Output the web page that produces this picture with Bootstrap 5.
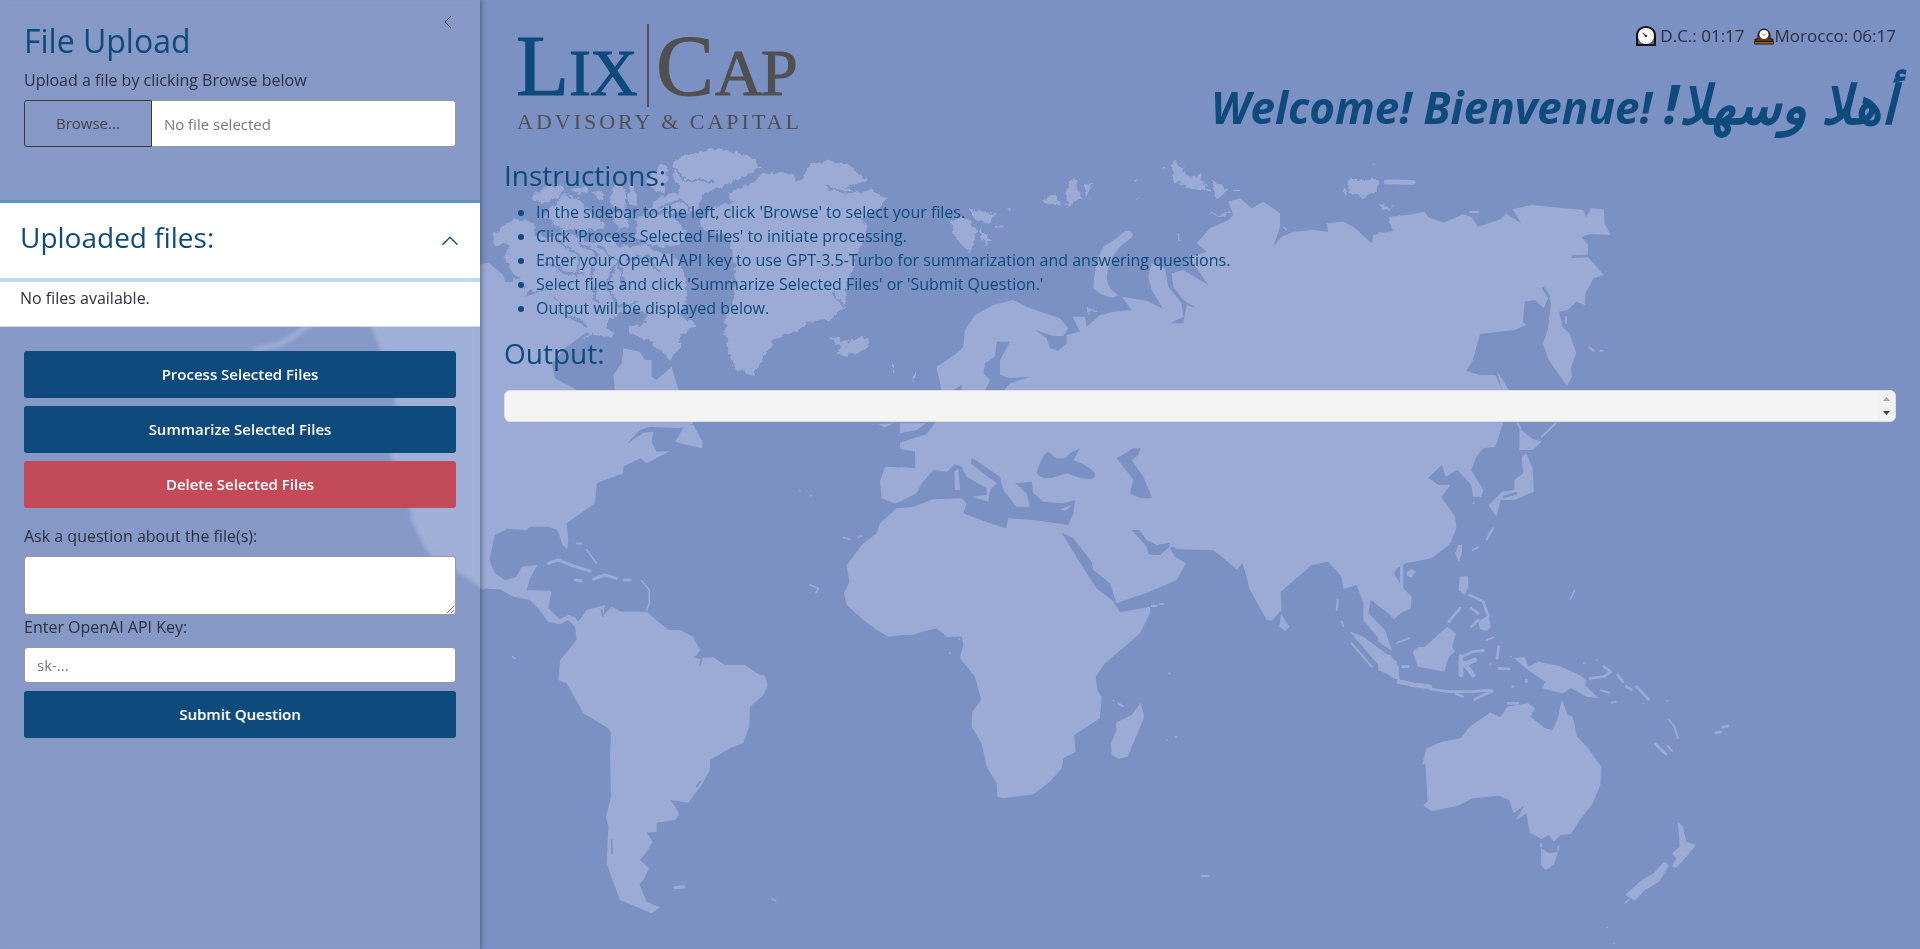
<!DOCTYPE html>
<html lang="en">
<head>
<meta charset="utf-8">
<meta name="viewport" content="width=device-width, initial-scale=1">
<title>LixCap File Assistant</title>
<link href="https://cdn.jsdelivr.net/npm/bootstrap@5.3.0/dist/css/bootstrap.min.css" rel="stylesheet">
<style>
  :root { --navy: #0e4a7b; --sea: #7b90c3; --land: #9babd6; }
  body { font-family: "Open Sans", "Noto Sans", sans-serif; font-weight: 400; font-size: 16px; line-height: 24px; color: #2b3040; background: var(--sea); }
  .world { position: fixed; inset: 0; width: 100%; height: 100%; z-index: -1; }
  .land { fill: var(--land); }
  .sea { fill: var(--sea); }
  .isles { fill: none; stroke: var(--land); stroke-linecap: round; stroke-linejoin: round; }
  .straits { fill: none; stroke: var(--sea); stroke-linecap: round; stroke-linejoin: round; }
  h1, h2, h3 { color: var(--navy); font-weight: 400; }
  .side { background: rgba(206, 211, 220, .12); backdrop-filter: blur(2px); box-shadow: 1px 0 5px rgba(40, 50, 80, .6); }
  .side h2 { font-size: 32px; line-height: 38px; font-weight: 400; }
  .side-top { padding: 22px 24px 0; }
  .section-title { font-size: 28px; line-height: 34px; }
  .collapse-toggle { position: absolute; top: 12px; right: 24px; line-height: 0; color: #222; }
  .form-control, .btn { border-radius: 3px; font-size: 15px; }
  .form-control { border-color: #999; padding: 5px 12px; height: 36px; }
  .input-group .form-control { height: 47px; }
  textarea.form-control { height: 59px; }
  .form-control::placeholder { color: #777; opacity: 1; }
  .browse-btn { border: 1px solid #3a3a3a; color: #444; padding: 10px 31px; }
  .wide-btn { height: 47px; font-weight: 600; color: #fff; background: var(--navy); border: 0; }
  .wide-btn.danger { background: #c34a58; }
  .files { background: #fff; border-top: 3px solid #6093c9; border-bottom: 1px solid #d5dae5; margin-top: 53px; }
  .files-head { border: 0; border-bottom: 4px solid #bddbec; background: none; height: 79px; padding: 0 20px; color: var(--navy); }
  .files-body { height: 44px; padding: 4px 20px; }
  .clocks { font-size: 17px; line-height: 23px; }
  .welcome { font-size: 44px; line-height: 53px; font-weight: 700; font-style: italic; margin-top: 34px; }
  .welcome bdi { font-size: 54px; line-height: 0; }
  .steps { color: var(--navy); padding-left: 32px; }
  .output-title { margin-bottom: 20px; }
  .output-box { height: 32px; background: #f4f4f4; border: 1px solid #ddd; border-radius: 6px; }
  .logo-text { font-family: "Liberation Serif", serif; }
</style>
</head>
<body>
<svg class="world" viewBox="0 0 1920 949" preserveAspectRatio="xMinYMin slice" aria-hidden="true">
  <defs>
    <filter id="rough" x="-5%" y="-5%" width="110%" height="110%" color-interpolation-filters="sRGB">
      <feTurbulence type="fractalNoise" baseFrequency=".05" numOctaves="3" seed="4"/>
      <feDisplacementMap in="SourceGraphic" scale="26" xChannelSelector="R" yChannelSelector="G"/>
    </filter>
  </defs>
  <!-- Pacific coast -->
  <path class="land" d="M484 262 470 300 340 300 345 326 370 326 379 345 395 400 389 450 402 490 412 515 425 542 446 564 484 590Z"/>
  <path class="isles" stroke-width="5" d="M255 350 280 344 300 332 312 322M413 518 425 543 438 562"/>
  <path class="sea" d="M315 330C325 318 355 318 370 328L378 345 350 350Z"/>
  <!-- The Americas, Greenland and the Atlantic side -->
  <g transform="translate(480 130) scale(.33333)">
    <g filter="url(#rough)">
      <path class="land" d="M40 320 95 265 160 275 170 315 200 325 270 310 330 340 390 320 420 350 500 345 530 370 590 380 615 430 620 520 600 560 650 580 600 620 600 650 570 690 520 640 450 610 450 590 500 580 500 550 440 540 400 560 380 590 400 625 340 610 300 640 330 600 300 565 240 550 275 530 240 520 195 480 150 485 135 500 130 460 75 462 120 440 90 420 75 380 90 340 40 350Z"/>
      <path class="land" d="M155 200 210 165 255 175 235 205 185 220ZM190 260 250 195 300 205 330 250 380 285 340 300 250 300ZM270 175 330 170 320 190 280 190ZM340 190 370 180 375 210 350 210ZM385 200 405 165 435 175 440 235 400 235ZM445 150 470 190 470 230 445 225ZM500 150 550 95 565 120 550 190 520 180ZM470 260 560 250 620 300 600 345 520 350 470 320ZM395 250 440 250 450 290 410 300Z"/>
      <path class="land" d="M580 90 640 70 720 55 800 75 840 110 790 140 720 170 680 185 640 250 560 245 500 240 540 200 600 190 580 140Z"/>
      <path class="land" d="M745 190 780 175 820 155 850 130 890 130 940 130 950 160 970 140 990 100 1050 92 1100 100 1160 150 1100 170 1120 185 1180 180 1220 205 1190 240 1150 260 1160 300 1150 340 1125 370 1130 400 1100 450 1095 530 1050 570 980 575 950 605 880 630 850 680 825 735 800 730 765 715 745 660 735 600 740 550 765 500 760 400 755 350 740 320 670 300 660 280 700 230 760 215Z"/>
      <path class="land" d="M1050 625 1075 620 1090 640 1150 618 1165 640 1150 665 1100 680 1065 665 1080 655Z"/>
      <path class="straits" stroke-width="8" d="M230 330 300 380 290 440M300 340 350 370 330 450 350 520M360 350 420 400 430 480M200 400 260 430 310 430M440 390 500 380 540 430M410 400 380 460 410 530 470 520M560 100 620 150 700 155M640 250 600 210 540 230M1060 490 1090 525M1040 170 1100 190 1150 180"/>
      <path class="isles" stroke-width="6" d="M1238 705 1240 720M1302 735 1298 750M345 605 360 570 380 610"/>
    </g>
    <path class="land" d="M-5 405 25 398 70 435 75 455 130 460 135 500 195 480 240 520 275 530 240 550 300 580 330 600 260 650 215 700 225 745 300 785 405 785 400 735 425 700 430 655 480 665 495 690 515 690 515 740 530 750 575 710 595 780 640 880 600 895 510 890 480 900 440 942 490 908 520 905 515 935 530 965 570 963 500 1000 480 985 430 1010 430 1030 350 1060 345 1120 260 1180 265 1230 262 1258 248 1245 232 1200 205 1190 150 1190 140 1200 80 1197 45 1215 28 1290 45 1330 75 1350 108 1342 125 1310 172 1305 150 1345 140 1380 215 1382 205 1435 240 1468 265 1455 285 1462 295 1475 320 1440 375 1425 370 1455 395 1430 425 1445 500 1445 565 1500 600 1500 640 1520 660 1560 645 1585 700 1582 735 1605 795 1605 835 1632 855 1637 863 1665 850 1695 810 1730 808 1790 790 1840 750 1855 690 1890 690 1920 665 1965 625 2018 570 2010 590 2035 597 2055 585 2070 530 2078 530 2105 500 2108 518 2135 500 2165 480 2190 507 2215 490 2250 478 2262 500 2315 540 2332 515 2350 420 2310 390 2230 380 2200 385 2090 378 2060 393 2000 390 1880 393 1810 385 1795 310 1750 260 1660 235 1650 240 1590 290 1530 285 1490 265 1470 240 1483 205 1475 170 1430 150 1410 100 1400 60 1378 -5 1375Z"/>
    <path class="land" d="M585 935 615 885 640 885 668 935 665 955 610 942Z"/>
    <path class="straits" stroke-width="5" d="M365 1440 368 1458M650 1970 660 1955M395 2130 396 2170M645 1580 665 1585 660 1605"/>
    <path class="isles" stroke-width="9" d="M205 1300 235 1290 280 1308 330 1323M340 1347 375 1335 410 1345M285 1350 303 1352M432 1350 450 1350M585 2273 612 2270"/>
    <path class="isles" stroke-width="5" d="M290 1240 305 1240M320 1260 350 1300M485 1352 508 1380 508 1420 500 1440M1090 1222 1110 1228M1135 1222 1145 1218M990 1365 1015 1375 1008 1387M98 1580 105 1586M875 2307 887 2312M960 1083V1083M992 1097V1097"/>
    <!-- Western Europe and north-west Africa -->
    <path class="land" d="M1195 882 1240 880 1215 893ZM1260 875 1365 875 1335 900 1300 915 1250 920 1290 900ZM1445 870 1365 890 1340 915 1265 942 1305 965 1305 1015 1215 1010 1200 1055 1205 1105 1245 1120 1310 1108 1330 1070 1360 1025 1395 1008 1445 1015ZM1390 785 1370 710 1445 660V785Z"/>
    <path class="land" d="M1445 1108 1380 1110 1300 1130 1255 1130 1200 1180 1190 1210 1150 1240 1100 1305 1108 1355 1092 1390 1100 1425 1150 1470 1190 1500 1225 1520 1310 1510 1370 1495 1400 1518 1445 1520Z"/>
  </g>
  <!-- Europe, Russia and the Middle East -->
  <g transform="translate(900 130) scale(.33333)">
    <path class="land" d="M0 870V785H125L110 710 160 680 190 650 195 600 225 555 280 525 340 510 380 530 430 548 480 565 505 595 490 618 460 618 405 600 440 625 450 655 475 662 500 640 500 615 540 605 518 560 555 560 560 590 600 555 640 545 695 540 665 500 740 512 790 537 755 480 745 440 755 400 795 415 805 470 845 520 850 560 810 580 850 580 860 525 890 535 850 510 820 470 815 430 850 420 925 465 880 400 870 380 920 365 890 340 930 295 985 270 1000 255 985 215 1020 205 1055 235 1090 215 1140 250 1140 290 1120 350 1145 320 1180 305 1240 300 1285 305 1280 280 1330 275 1360 290 1415 340 1420 315 1490 300 1465 275 1500 255V1250H0Z"/>
    <path class="sea" d="M-5 955 45 965 46 1015 -5 1010ZM-10 875 108 875 80 912 -5 940ZM-10 1120 50 1090 65 1060 100 1020 140 1025 165 1003 185 1010 200 1040 260 1075 260 1095 215 1100 265 1115 270 1080 290 1060 250 1030 213 1000 215 985 235 995 300 1040 310 1080 350 1130 390 1130 380 1090 345 1060 395 1055 400 1090 430 1115 490 1120 525 1110 520 1150 505 1185 400 1170 325 1165 318 1195 270 1180 190 1150 200 1120 185 1105 100 1108 40 1130 -10 1135ZM410 1025C420 1000 430 970 445 965L470 985 495 985 510 970 540 955 520 990C550 1000 580 1020 585 1030Q587 1042 575 1047L545 1045 500 1030 450 1045Q415 1045 410 1025ZM650 985 700 955 722 955 715 975 695 990 730 1040 757 1105 720 1105 690 1090 700 1050ZM290 635 330 635 300 690 300 735 330 745 390 740 330 760 310 783 255 783 270 750 250 730 255 700 285 680ZM155 783 185 765V783Z"/>
    <path class="land" d="M163 1025 175 1015 180 1080 165 1080ZM480 1138 515 1125 495 1143ZM0 880 78 880 50 900 0 910Z"/>
    <g filter="url(#rough)">
      <path class="land" d="M145 270 190 260 235 300 210 370 175 330ZM205 240 290 245 265 280 225 270ZM240 295 275 330 260 345 240 320ZM425 210 465 190 485 225 445 225ZM500 180 520 145 545 205 500 225ZM550 170 580 155 565 205ZM815 100 830 98 865 140 900 135 928 185 870 175 820 150ZM935 150 985 180 950 210ZM1345 150 1435 150 1430 180 1390 205 1345 180ZM1440 222 1480 235 1445 240Z"/>
      <path class="isles" stroke-width="6" d="M705 152H712M790 115H796M715 206V206M835 315V325M935 245 955 260 990 250M1330 175 1342 190M1420 103V103M292 295 308 290M325 240 335 238M565 540 582 542M1000 182H1018M1145 290 1160 300"/>
    </g>
    <path class="isles" stroke-width="14" d="M1458 156 1540 157"/>
    <path class="land" d="M675 303Q700 300 698 320L660 350Q625 390 620 440Q620 475 655 495L640 503Q600 498 580 475Q582 400 610 350L650 325Z"/>
  </g>
  <!-- Siberia, Korea and Japan -->
  <g transform="translate(1380 130) scale(.34435 .33333)">
    <path class="land" d="M-5 305 40 312 25 260 80 255 130 245 140 262 185 278 240 253 265 260 285 290 350 268 365 250 410 280 385 238 440 225 590 240 600 262 612 235 650 238 652 280 670 315 610 312 585 322 605 345 603 380 650 435 620 445 597 490 595 525 570 515 545 540 520 545 530 590 550 610 570 670 555 710 557 740 543 768 490 690 473 640 487 600 497 520 490 500 475 535 450 510 420 515 415 575 425 585 390 600 290 612 270 690 250 722 290 735 335 735 357 785 357 880 335 950 300 955 280 980 265 1020 300 1080 295 1100 270 1100 265 1065 225 1020 190 1040 180 1005 140 1043 170 1065 205 1065 178 1100 218 1160 222 1190 205 1240 -5 1240Z"/>
    <path class="land" d="M340 722 375 782H355ZM405 895 440 925 470 935 443 960 405 960ZM425 970 443 1015 447 1085 390 1110 350 1110 338 1160 315 1125 355 1085 390 1080 390 1050 415 1030 412 980Z"/>
    <path class="straits" stroke-width="8" d="M475 475 490 500M560 380 605 378M395 1090 360 1100"/>
    <path class="isles" stroke-width="6" d="M608 652 620 662M640 662H647M470 920 510 880M540 560V580M328 1195 310 1228M272 1120V1120M262 246H285M400 880 408 895"/>
  </g>
  <!-- Africa, Arabia and India -->
  <g transform="translate(900 530) scale(.33333)">
    <path class="land" d="M-5 -5V312L40 315 75 300 115 295 140 322 185 318 190 345 180 385 225 440 243 510 217 545 215 590 245 640 260 710 290 760 292 800 310 805 400 793 450 755 485 715 490 685 527 665 523 615 600 565 605 500 592 480 587 440 615 400 720 310 750 250 750 230 660 247 640 215 650 220 750 185 830 150 858 100 825 80 808 50 780 75 745 72 750 45 810 38 830 58 940 60 1010 118 1028 100 1050 180 1100 270 1115 272 1145 240 1142 185 1235 105 1285 95 1325 140 1330 178 1370 165 1390 220 1390 270 1440 330 1475 360 1455 300 1405 250 1412 210 1480 260 1510 225V-5Z"/>
    <path class="sea" d="M485 8 520 25 575 95 580 120 630 160 650 222 590 175 560 130 535 90ZM695 0 718 0 740 30 770 45 810 38 808 50 780 75 745 72 740 50Z"/>
    <path class="land" d="M722 518 733 560 683 680 655 686 635 675 633 640 650 600 647 578 695 555ZM1143 250 1168 290 1155 303 1138 290ZM1350 305 1390 320 1490 395 1500 450 1480 445 1430 400Z"/>
    <path class="sea" d="M1500 105 1480 130 1500 158Z"/>
    <path class="isles" stroke-width="6" d="M780 222H790M755 228H770M640 512V512M655 520 668 528M800 630V630M828 620V620M905 1038 925 1038M1313 210 1310 240M1325 275 1330 288M1355 340 1415 410M808 430V430M178 328V328M150 370V370"/>
  </g>
  <!-- South-east Asia and Oceania -->
  <g transform="translate(1380 530) scale(.34435 .33333)">
    <path class="land" d="M-5 -5V225L20 245 40 268 60 250 90 235 92 200 45 150 40 120 75 100 150 85 200 45 222 -5ZM78 125 92 118 105 125 90 143 78 138ZM228 45 238 45 238 70 229 95 218 70ZM232 140 255 138 257 170 245 195 228 180ZM195 290 220 310 210 350 217 365 200 380 187 425 110 410 95 365 110 352 130 350ZM-5 295 18 315 35 362 -5 335ZM-5 362 30 375 55 410 50 447 -5 420ZM285 275 315 255 322 290 310 303 290 298ZM390 385 420 380 430 410 460 395 520 408 570 430 600 450 595 465 635 505 600 500 555 475 530 490 490 480 470 475 480 455 430 420Z"/>
    <path class="land" d="M528 508 545 555 560 560 572 620 605 655 643 710 640 765 615 825 580 870 555 912 525 915 505 935 490 915 470 927 435 908 425 850 395 870 420 825 388 850 375 810 345 797 270 805 225 828 150 843 125 825 138 815 132 700 122 705 135 655 180 635 235 625 260 590 320 548 350 562 370 530 430 520 450 535 437 560 480 595 500 600 515 570ZM468 955 490 970 517 965 505 1005 480 1020 468 1005ZM865 875 880 890 890 935 918 945 890 980 860 1013 848 1010 860 985 848 970 870 950ZM825 995 840 1005 810 1055 770 1080 740 1112 712 1095 760 1050 795 1030Z"/>
    <path class="isles" stroke-width="14" d="M55 455 100 465 145 470M235 380 235 435M245 400 270 435M240 405 275 390"/>
    <path class="isles" stroke-width="8" d="M145 477 200 485 270 485 320 480M275 508 325 483M220 490 240 500M235 380 270 365 300 362M260 195 300 215 315 260M265 235 285 250M265 290 285 270M200 275 232 235M345 350 340 385M345 415 375 417M610 445 650 440 670 425 650 410M690 435 705 455M715 470 730 478M745 470 780 508M800 642 830 672M975 608 990 606M995 592 1010 588M425 450V455M385 470V470M65 410H82M372 520 400 520"/>
    <path class="isles" stroke-width="5" d="M838 568 855 590 865 625M835 648 848 662M765 520V520M833 512V512M592 400V400M630 390V390M660 1192V1192M680 1240V1240M712 1118 722 1110M553 207 565 182M270 60 285 52M310 28 325 0M468 940V950M518 950V960M640 480 665 488M672 518 685 515M330 322 310 330M320 402V402M380 380V380M85 325 50 338"/>
  </g>
</svg>

<div class="container-fluid p-0">
  <div class="row g-0 min-vh-100">
    <aside class="side col-3 position-relative">
      <button class="collapse-toggle btn p-0 border-0" type="button" aria-label="Collapse sidebar">
        <svg width="16" height="20" viewBox="0 0 16 20" fill="none" stroke="currentColor"><path d="M11 4 5 10 11 16"/></svg>
      </button>
      <div class="side-top">
        <h2 class="mb-2">File Upload</h2>
        <label class="d-block mb-2" for="fileName">Upload a file by clicking Browse below</label>
        <div class="input-group">
          <button class="btn browse-btn" type="button">Browse...</button>
          <input id="fileName" class="form-control" type="text" placeholder="No file selected" readonly>
        </div>
      </div>
      <section class="files">
        <button class="files-head w-100 d-flex justify-content-between align-items-center" type="button" aria-expanded="true">
          <span class="section-title pb-2">Uploaded files:</span>
          <svg width="20" height="20" viewBox="0 0 16 16" fill="none" stroke="currentColor"><path d="M2 11 8 5 14 11"/></svg>
        </button>
        <div class="files-body">No files available.</div>
      </section>
      <div class="px-4 pt-4">
        <div class="d-grid gap-2">
          <button class="btn wide-btn" type="button">Process Selected Files</button>
          <button class="btn wide-btn" type="button">Summarize Selected Files</button>
          <button class="btn wide-btn danger" type="button">Delete Selected Files</button>
        </div>
        <label class="d-block mt-3 mb-2" for="question">Ask a question about the file(s):</label>
        <textarea id="question" class="form-control"></textarea>
        <label class="d-block mb-2" for="apiKey">Enter OpenAI API Key:</label>
        <input id="apiKey" class="form-control mb-2" type="text" placeholder="sk-...">
        <button class="btn wide-btn w-100" type="button">Submit Question</button>
      </div>
    </aside>

    <main class="col-9 px-4 pt-4">
      <header class="d-flex justify-content-between">
        <svg width="300" height="110" viewBox="0 0 300 110" class="logo-text overflow-visible" role="img" aria-label="LixCap Advisory and Capital">
          <g fill="#0e4a7b" stroke="#0e4a7b"><text x="12" y="71" font-size="87">L</text><text x="65" y="71" font-size="66">I</text><text x="86" y="71" font-size="66">X</text></g>
          <path d="M144 0V83" stroke="#505050" stroke-width="2"/>
          <g fill="#505050"><g stroke="#505050"><text x="152" y="71" font-size="87">C</text><text x="211" y="71" font-size="66">A</text><text x="257" y="71" font-size="66">P</text></g>
          <text x="13" y="105" font-size="22" letter-spacing="3">ADVISORY &amp; CAPITAL</text></g>
        </svg>
        <div class="text-end">
          <div class="clocks d-flex justify-content-end align-items-center">
            <svg class="me-1" width="20" height="20" viewBox="0 0 20 20"><path d="M1 19V10C1 4 5 1 10 1s9 3 9 9v9Z" fill="#666" stroke="#111" stroke-width="2"/><circle cx="10" cy="10" r="8" fill="#fff"/><circle cx="10" cy="10" r="6.500" fill="none" stroke="#bbb" stroke-dasharray="1 2.400"/><path d="M7 7 10 10" stroke="#d22" stroke-width="1.200"/><circle cx="10" cy="10" r="1"/></svg>
            <span>D.C.: 01:17</span>
            <svg class="ms-2" width="22" height="20" viewBox="0 0 22 20"><path d="M2 17V13h3V9a5.500 5.500 0 0 1 12 0v4h3v4Z" fill="#5b3a2c" stroke="#1c1210"/><path d="M1.500 15.500H20.500V18H1.500Z" fill="#a66a10" stroke="#1c1210"/><circle cx="11" cy="8.500" r="4.500" fill="#fff"/><path d="M9 7.500 11 9.500 13 7.500" fill="none" stroke="#c80"/></svg>
            <span>Morocco: 06:17</span>
          </div>
          <h1 class="welcome text-nowrap mb-0">Welcome! Bienvenue! <bdi dir="rtl" lang="ar">أهلا وسهلا!</bdi></h1>
        </div>
      </header>
      <h3 class="section-title mt-4 mb-2">Instructions:</h3>
      <ul class="steps mb-3">
        <li>In the sidebar to the left, click 'Browse' to select your files.</li>
        <li>Click 'Process Selected Files' to initiate processing.</li>
        <li>Enter your OpenAI API key to use GPT-3.5-Turbo for summarization and answering questions.</li>
        <li>Select files and click 'Summarize Selected Files' or 'Submit Question.'</li>
        <li>Output will be displayed below.</li>
      </ul>
      <h3 class="section-title output-title">Output:</h3>
      <div class="output-box d-flex justify-content-between overflow-hidden">
        <pre class="flex-grow-1 m-0" tabindex="0"></pre>
        <svg width="17" height="30" viewBox="0 0 17 30" aria-hidden="true"><path d="M0 0H17V30H0Z" fill="#f1f1f1"/><path d="M5 10 8.500 6 12 10Z" fill="#a3a3a3"/><path d="M5 20 8.500 24 12 20Z" fill="#444"/></svg>
      </div>
    </main>
  </div>
</div>
<script src="https://cdn.jsdelivr.net/npm/bootstrap@5.3.0/dist/js/bootstrap.bundle.min.js"></script>
</body>
</html>
